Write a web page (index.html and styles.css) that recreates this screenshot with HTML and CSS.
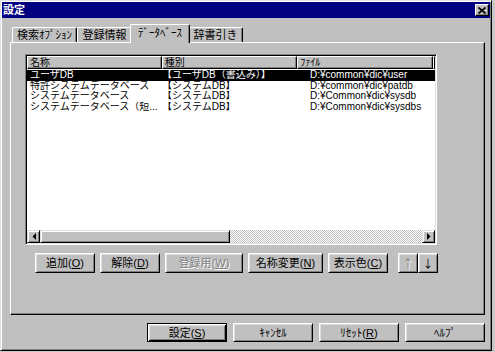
FILE: index.html
```html
<!DOCTYPE html>
<html>
  <head>
    <meta charset="utf-8" />
    <title>設定</title>
    <link rel="stylesheet" href="styles.css">
  </head>
  <body>
    <div class="window">
      <div class="titlebar">
        <span class="title">設定</span>
        <span class="close">
          <svg width="8" height="7" viewBox="0 0 8 7"><path d="M0.5 0.5 L7.5 6.5 M7.5 0.5 L0.5 6.5" stroke="#000" stroke-width="1.7" fill="none"/></svg>
        </span>
      </div>
      <div class="content">
        <div class="tabs">
          <div class="tab tab-search">検索ｵﾌﾟｼｮﾝ</div>
          <div class="tab tab-reg">登録情報</div>
          <div class="tab tab-db active">ﾃﾞｰﾀﾍﾞｰｽ</div>
          <div class="tab tab-dict">辞書引き</div>
        </div>
        <div class="panel">
          <div class="list">
            <div class="list-head">
              <div class="th c1">名称</div>
              <div class="th c2">種別</div>
              <div class="th c3">ﾌｧｲﾙ</div>
              <div class="th fill"></div>
            </div>
            <div class="rows">
              <div class="row selected">
                <div class="td c1">ユーザDB</div>
                <div class="td c2">【ユーザDB（書込み）】</div>
                <div class="td c3">D:¥common¥dic¥user</div>
              </div>
              <div class="row">
                <div class="td c1">特許システムデータベース</div>
                <div class="td c2">【システムDB】</div>
                <div class="td c3">D:¥common¥dic¥patdb</div>
              </div>
              <div class="row">
                <div class="td c1">システムデータベース</div>
                <div class="td c2">【システムDB】</div>
                <div class="td c3">D:¥Common¥dic¥sysdb</div>
              </div>
              <div class="row">
                <div class="td c1">システムデータベース（短...</div>
                <div class="td c2">【システムDB】</div>
                <div class="td c3">D:¥Common¥dic¥sysdbs</div>
              </div>
            </div>
            <div class="hscroll">
              <div class="sb-btn">
                <svg width="4" height="7" viewBox="0 0 4 7"><polygon points="4,0 0.5,3.5 4,7" fill="#000"/></svg>
              </div>
              <div class="sb-thumb"></div>
              <div class="sb-track"></div>
              <div class="sb-btn">
                <svg width="4" height="7" viewBox="0 0 4 7"><polygon points="0,0 3.5,3.5 0,7" fill="#000"/></svg>
              </div>
            </div>
          </div>
          <div class="list-buttons">
            <button class="btn w60">追加(<u>O</u>)</button>
            <button class="btn w60">解除(<u>D</u>)</button>
            <button class="btn w78 disabled">登録用(<u>W</u>)</button>
            <button class="btn w75">名称変更(<u>N</u>)</button>
            <button class="btn w60">表示色(<u>C</u>)</button>
            <div class="arrows">
              <button class="btn arrow disabled">↑</button>
              <button class="btn arrow">↓</button>
            </div>
          </div>
        </div>
        <div class="dialog-buttons">
          <button class="btn w80 default">設定(<u>S</u>)</button>
          <button class="btn w80">ｷｬﾝｾﾙ</button>
          <button class="btn w80">ﾘｾｯﾄ(<u>R</u>)</button>
          <button class="btn w80">ﾍﾙﾌﾟ</button>
        </div>
      </div>
    </div>
  </body>
</html>
```

FILE: styles.css
```css
body {
  margin: 0;
  background: #c8c8c8;
  font-family: "Liberation Sans", "Noto Sans CJK JP", sans-serif;
  font-size: 11px;
  color: #000;
}

/* window frame */
.window {
  width: 492px;
  height: 351px;
  box-sizing: border-box;
  background: #c0c0c0;
  border: 1px solid;
  border-color: #dfdfdf #000 #000 #dfdfdf;
  box-shadow: inset 1px 1px #fff, inset -1px -1px #808080;
  padding: 1px;
  display: flex;
  flex-direction: column;
}
.titlebar {
  height: 16px;
  background: #000080;
  color: #fff;
  display: flex;
  align-items: center;
  justify-content: space-between;
  padding: 0 1px 0 1px;
}
.title {
  font-weight: bold;
  font-size: 11px;
  line-height: 16px;
}
.close {
  width: 14px;
  height: 12px;
  box-sizing: border-box;
  background: #c0c0c0;
  border: 1px solid;
  border-color: #fff #000 #000 #fff;
  box-shadow: inset -1px -1px #808080;
  display: flex;
  align-items: center;
  justify-content: center;
}
.close svg {
  display: block;
}

.content {
  flex: 1;
  padding: 6px 5px 0 8px;
  display: flex;
  flex-direction: column;
}

/* tabs */
.tabs {
  display: flex;
  align-items: flex-end;
  height: 18px;
  padding-left: 2px;
  position: relative;
  z-index: 1;
}
.tab {
  height: 15px;
  box-sizing: border-box;
  background: #c0c0c0;
  border-top: 1px solid #fff;
  border-left: 1px solid #fff;
  border-right: 1px solid #000;
  border-radius: 2px 2px 0 0;
  box-shadow: inset -1px 0 #808080;
  font-size: 11px;
  line-height: 14px;
  text-align: center;
}
.tab-search { width: 65px; }
.tab-reg { width: 55px; }
.tab-db { width: 60px; }
.tab-dict { width: 55px; }
.tab.active {
  height: 19px;
  margin: 0 -2px -1px -2px;
  line-height: 16px;
  position: relative;
  z-index: 2;
}

/* tab page */
.panel {
  height: 273px;
  box-sizing: border-box;
  border: 1px solid;
  border-color: #fff #000 #000 #fff;
  box-shadow: inset -1px -1px #808080;
  padding: 11px 0 0 14px;
}

/* list view */
.list {
  width: 412px;
  height: 191px;
  box-sizing: border-box;
  background: #fff;
  border: 1px solid;
  border-color: #808080 #fff #fff #808080;
  box-shadow: inset 1px 1px #000, inset -1px -1px #dfdfdf;
  padding: 1px;
  display: flex;
  flex-direction: column;
}
.list-head {
  display: flex;
  height: 13px;
}
.th {
  box-sizing: border-box;
  background: #c0c0c0;
  border-top: 1px solid #fff;
  border-left: 1px solid #fff;
  border-right: 1px solid #000;
  border-bottom: 1px solid #000;
  box-shadow: inset -1px -1px #808080;
  font-size: 10px;
  line-height: 11px;
  padding-left: 2px;
  white-space: nowrap;
}
.c1 { width: 135px; }
.c2 { width: 136px; }
.c3 { width: 136px; }
.fill {
  flex: 1;
  padding: 0;
}
.rows {
  flex: 1;
  padding-top: 1px;
}
.row {
  display: flex;
  height: 10.5px;
  font-size: 10px;
  line-height: 10.5px;
  white-space: nowrap;
}
.row.selected {
  background: #000;
  color: #fff;
}
.td {
  overflow: hidden;
  padding-left: 3px;
  box-sizing: border-box;
}
.td.c2 {
  padding-left: 0;
}
.td.c3 {
  padding-left: 12px;
}

/* horizontal scrollbar */
.hscroll {
  display: flex;
  height: 13px;
}
.sb-btn,
.sb-thumb {
  box-sizing: border-box;
  background: #c0c0c0;
  border: 1px solid;
  border-color: #dfdfdf #000 #000 #dfdfdf;
  box-shadow: inset 1px 1px #fff, inset -1px -1px #808080;
}
.sb-btn {
  width: 13px;
  display: flex;
  align-items: center;
  justify-content: center;
}
.sb-btn svg {
  display: block;
}
.sb-thumb {
  width: 190px;
}
.sb-track {
  flex: 1;
  background: repeating-conic-gradient(#fff 0 25%, #c0c0c0 0 50%) 0 0 / 2px 2px;
}

/* buttons */
.btn {
  height: 20px;
  box-sizing: border-box;
  padding: 0;
  background: #c0c0c0;
  border: 1px solid;
  border-color: #fff #000 #000 #fff;
  box-shadow: inset 1px 1px #dfdfdf, inset -1px -1px #808080;
  font-family: inherit;
  font-size: 11px;
  line-height: 16px;
  color: #000;
  text-align: center;
  white-space: nowrap;
}
.btn u {
  text-underline-offset: 1px;
}
.btn.disabled {
  color: #808080;
  text-shadow: 1px 1px #fff;
}
.btn.default {
  border-color: #000;
  box-shadow: inset 1px 1px #fff, inset -1px -1px #000, inset 2px 2px #dfdfdf, inset -2px -2px #808080;
}
.w60 { width: 60px; }
.w75 { width: 75px; }
.w78 { width: 78px; }
.w80 { width: 80px; }

.list-buttons {
  display: flex;
  gap: 5px;
  margin-top: 8px;
  padding-left: 10px;
}
.arrows {
  display: flex;
  margin-left: 5px;
}
.btn.arrow {
  width: 20px;
  font-family: "Noto Sans CJK JP", sans-serif;
}

.dialog-buttons {
  display: flex;
  justify-content: flex-end;
  gap: 6px;
  margin-top: 8px;
}
.dialog-buttons .btn {
  height: 19px;
}
```
